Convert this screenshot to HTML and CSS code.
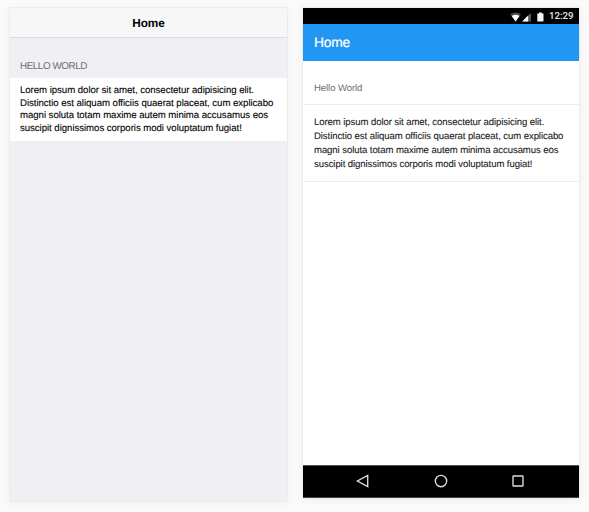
FILE: index.html
```html
<!DOCTYPE html>
<html lang="en">
<head>
<meta charset="utf-8">
<title>Home</title>
<link rel="stylesheet" href="styles.css">
</head>
<body>
<main class="previews">
  <section class="phone ios">
    <header class="navbar">Home</header>
    <h2 class="block-title">HELLO WORLD</h2>
    <p class="block"><span>Lorem ipsum dolor sit amet, consectetur adipisicing elit.</span><br><span>Distinctio est aliquam officiis quaerat placeat, cum explicabo</span><br><span>magni soluta totam maxime autem minima accusamus eos</span><br><span>suscipit dignissimos corporis modi voluptatum fugiat!</span></p>
  </section>
  <section class="phone android">
    <div class="statusbar">
      <svg class="status-icons" width="36" height="12" viewBox="0 0 36 12">
        <path d="M0.2 3.3Q5.6-.5 11 3.3L5.6 10.4Z" fill="#484848"/>
        <path d="M1.7 5Q5.6 2.6 9.5 5L5.6 10.4Z" fill="#fff"/>
        <path d="M21 1.8V10.5H12.2Z" fill="#555"/>
        <path d="M18.2 4.6V10.5H12.2Z" fill="#fff"/>
        <path d="M27.3 2.4H29V1.6H31.8V2.4H33.5V10.6H27.3Z" fill="#f4f4f4"/>
      </svg>
      <span class="clock">12:29</span>
    </div>
    <header class="navbar">Home</header>
    <h2 class="block-title">Hello World</h2>
    <p class="block"><span>Lorem ipsum dolor sit amet, consectetur adipisicing elit.</span><br><span>Distinctio est aliquam officiis quaerat placeat, cum explicabo</span><br><span>magni soluta totam maxime autem minima accusamus eos</span><br><span>suscipit dignissimos corporis modi voluptatum fugiat!</span></p>
    <nav class="system-nav">
      <svg width="14" height="14" viewBox="0 0 14 14"><path d="M11.7 1.4V12.6L1.4 7Z"/></svg>
      <svg width="14" height="14" viewBox="0 0 14 14"><circle cx="7" cy="7" r="5.7"/></svg>
      <svg width="14" height="14" viewBox="0 0 14 14"><rect x="2" y="2" width="10" height="10" rx=".5"/></svg>
    </nav>
  </section>
</main>
</body>
</html>
```
FILE: styles.css
```css
* { box-sizing: border-box; }

body {
  margin: 0;
  height: 512px;
  overflow: hidden;
  background: #fafafa;
  font-family: "Liberation Sans", Arial, sans-serif;
  text-rendering: geometricPrecision;
}

.previews {
  display: flex;
  align-items: flex-start;
  gap: 16px;
  padding: 8px 0 0 10px;
}

h2, p { margin: 0; font-weight: normal; }

.phone {
  display: flex;
  flex-direction: column;
  box-shadow: 0 0 0 1px rgba(0, 0, 0, .035), 0 1px 10px rgba(0, 0, 0, .05);
}

.ios {
  width: 277px;
  height: 493px;
  background: #efeff4;
}

.ios .navbar {
  height: 30px;
  border-bottom: 1px solid #dcdce0;
  background: #f7f7f7;
  font-size: 11.8px;
  font-weight: bold;
  letter-spacing: -.1px;
  line-height: 31px;
  text-align: center;
}

.ios .block-title {
  height: 40px;
  padding: 22px 10px 0;
  color: #6d6d72;
  font-size: 9.9px;
  letter-spacing: -.45px;
  line-height: 13px;
}

.ios .block {
  height: 63px;
  padding: 7px 10px 0;
  background: #fff;
  font-size: 9.65px;
  letter-spacing: -.045px;
  line-height: 12.6px;
  white-space: nowrap;
  -webkit-text-stroke: .1px #000;
}

.android {
  width: 276px;
  height: 489.5px;
  background: #fff;
}

.statusbar {
  display: flex;
  align-items: center;
  justify-content: flex-end;
  gap: 3px;
  height: 16px;
  padding: 1px 5.5px 0 0;
  background: #000;
  color: #e8e8e8;
}

.clock {
  font: 500 9.7px/14px Roboto, sans-serif;
}

.android .navbar {
  height: 37px;
  padding-left: 11px;
  background: #2196f3;
  color: #fff;
  font-size: 13.8px;
  letter-spacing: -.25px;
  line-height: 37px;
  -webkit-text-stroke: .2px #fff;
}

.android .block-title {
  height: 44px;
  padding: 22px 11px 0;
  border-bottom: 1px solid #ededed;
  color: #707070;
  font-size: 9.6px;
  letter-spacing: -.1px;
  line-height: 12px;
}

.android .block {
  height: 77px;
  padding: 11px 11px 0;
  border-bottom: 1px solid #ededed;
  color: #212121;
  font-size: 9.55px;
  letter-spacing: -.075px;
  line-height: 14px;
  white-space: nowrap;
  -webkit-text-stroke: .1px #212121;
}

.system-nav {
  display: flex;
  justify-content: center;
  align-items: center;
  gap: 63.5px;
  height: 32.5px;
  margin-top: auto;
  padding-right: 1px;
  border-top: 1px solid #555;
  border-bottom: 1px solid #444;
  background: #000;
}

.system-nav svg {
  fill: none;
  stroke: #dedede;
  stroke-width: 1.35;
}
```
